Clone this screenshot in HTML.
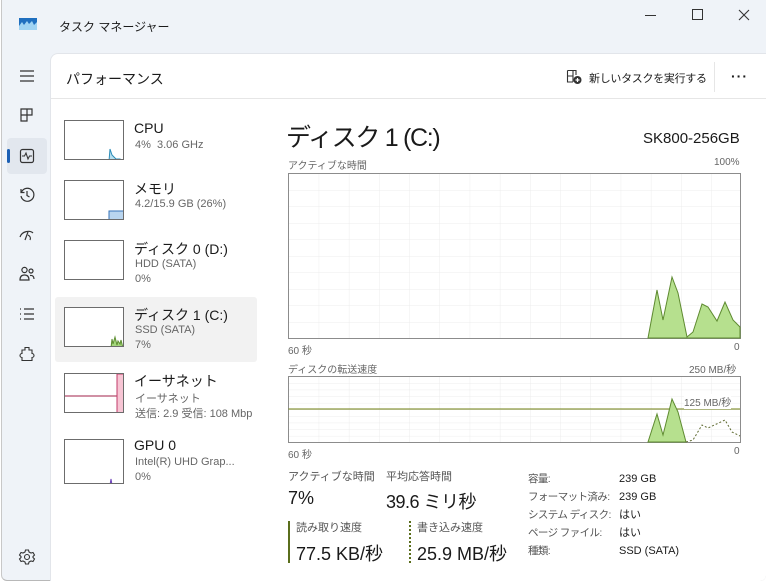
<!DOCTYPE html>
<html><head><meta charset="utf-8"><style>
*{margin:0;padding:0;box-sizing:border-box}
body{width:766px;height:583px;overflow:hidden;background:#fff;font-family:"Liberation Sans","Noto Sans CJK JP",sans-serif;color:#1a1a1a;position:relative}
#win{position:absolute;left:1px;top:0;width:765px;height:581px;background:#eff3f8;border-left:1px solid #c8c8c8;border-bottom:1px solid #b8b8b8;border-radius:0 0 6px 6px}
.a{position:absolute;white-space:nowrap}
#panel{position:absolute;left:50px;top:53px;width:716px;height:528px;background:#fff;border-top:1px solid #e2e5ea;border-left:1px solid #e2e5ea;border-radius:8px 0 6px 0}
.th{position:absolute;left:64px;width:60px;height:40px;border:1px solid #6c6c6c;background:#fff;overflow:hidden}
.t1{font-size:14px;color:#1a1a1a}
.t2{font-size:11px;color:#666}
.s{font-size:10px;color:#666}
.ic{position:absolute;left:16px;width:18px;height:18px}
</style></head><body>
<div id="win">
<svg class="a" style="left:17px;top:18px" width="18" height="12"><rect width="18" height="12" fill="#9fd3f3"/><path d="M0 8 L3 4 L5 7 L8 3 L10 6 L13 3 L15 7 L18 4 V0 H0Z" fill="#1f6fbf"/></svg>
<div class="a" style="left:57px;top:18px;font-size:12px">タスク マネージャー</div>
<div class="a" style="left:643px;top:15px;width:11px;height:1px;background:#333"></div>
<div class="a" style="left:690px;top:9px;width:11px;height:11px;border:1px solid #333"></div>
<svg class="a" style="left:736px;top:9px" width="12" height="12"><path d="M1 1L11 11M11 1L1 11" stroke="#333" stroke-width="1.1"/></svg>
<svg class="ic" style="top:67px" viewBox="0 0 18 18"><path d="M2 4H16M2 9H16M2 14H16" stroke="#333" stroke-width="1.2"/></svg>
<svg class="ic" style="top:106px" viewBox="0 0 18 18"><path d="M3 3H14V9H9V15H3Z M9 3V9 M3 9H9" fill="none" stroke="#333" stroke-width="1.2"/></svg>
<div class="a" style="left:5px;top:138px;width:40px;height:36px;background:#e2e7ee;border-radius:4px"></div>
<div class="a" style="left:5px;top:149px;width:3px;height:14px;background:#1b5fb4;border-radius:2px"></div>
<svg class="ic" style="top:147px" viewBox="0 0 18 18"><rect x="2.5" y="2.5" width="13" height="13" rx="2" fill="none" stroke="#333" stroke-width="1.2"/><path d="M4 9H6.5L8 6L10 12L11.5 9H14" fill="none" stroke="#333" stroke-width="1.1"/></svg>
<svg class="ic" style="top:186px" viewBox="0 0 18 18"><path d="M3.5 6A6.5 6.5 0 1 1 3 10M3 3V6.5H6.5M9 5V9.5L11.5 11" fill="none" stroke="#333" stroke-width="1.2"/></svg>
<svg class="ic" style="top:226px" viewBox="0 0 18 18"><path d="M2 11C4 5 12 4 15 7M7 14L10 6M10 9C12 10 13 12 12 14" fill="none" stroke="#333" stroke-width="1.2"/></svg>
<svg class="ic" style="top:265px" viewBox="0 0 18 18"><circle cx="6.5" cy="5" r="2.6" fill="none" stroke="#333" stroke-width="1.2"/><circle cx="13" cy="6" r="2" fill="none" stroke="#333" stroke-width="1.2"/><path d="M2 15C2 11 4 10 6.5 10C9 10 11 11 11 15ZM12 10.5C15 10 16 12 16 14" fill="none" stroke="#333" stroke-width="1.2"/></svg>
<svg class="ic" style="top:305px" viewBox="0 0 18 18"><path d="M6 4H16M6 9H16M6 14H16M2 4H3M2 9H3M2 14H3" stroke="#333" stroke-width="1.3"/></svg>
<svg class="ic" style="top:345px" viewBox="0 0 18 18"><path d="M7 2.5H11V5H14V8.5A2 2 0 0 1 14 12.5V15.5H4V12.5A2 2 0 0 1 4 8.5V5H7Z" fill="none" stroke="#333" stroke-width="1.1"/></svg>
<svg class="ic" style="top:548px" viewBox="0 0 18 18"><circle cx="9" cy="9" r="2.5" fill="none" stroke="#333" stroke-width="1.1"/><path d="M7.5 2H10.5L11 4L13 5L15 4.5L16.5 7L15 8.5V9.5L16.5 11L15 13.5L13 13L11 14L10.5 16H7.5L7 14L5 13L3 13.5L1.5 11L3 9.5V8.5L1.5 7L3 4.5L5 5L7 4Z" fill="none" stroke="#333" stroke-width="1.1"/></svg>
</div>

<div id="panel"></div>
<div class="a" style="left:51px;top:98px;width:715px;height:1px;background:#e6e6e6"></div>
<div class="a" style="left:66px;top:69px;font-size:14px">パフォーマンス</div>
<svg class="a" style="left:566px;top:69px" width="16" height="16"><path d="M1.5 1.5H10V6M1.5 1.5V13H7M1.5 7H7M7 1.5V13" fill="none" stroke="#333" stroke-width="1.1"/><circle cx="11.5" cy="11" r="4" fill="#333"/><path d="M11.5 9V13M9.5 11H13.5" stroke="#fff" stroke-width="1.2"/></svg>
<div class="a" style="left:589px;top:70px;font-size:11px;letter-spacing:-0.3px">新しいタスクを実行する</div>
<div class="a" style="left:714px;top:62px;width:1px;height:30px;background:#e6e6e6"></div>
<div class="a" style="left:731px;top:68px;font-size:14px;letter-spacing:1px;font-weight:bold">···</div>

<div class="a" style="left:55px;top:297px;width:202px;height:65px;background:#f2f2f2;border-radius:3px"></div>
<div class="th" style="top:120px"><svg width="60" height="40"><path d="M44 40L45 28L47 34L49 36L51 38L55 38L58 40Z" fill="#b7dfef" stroke="#2a8cb8"/></svg></div>
<div class="a t1" style="left:134px;top:120px">CPU</div>
<div class="a t2" style="left:135px;top:139px">4%&nbsp; 3.06 GHz</div>

<div class="th" style="top:180px"><svg width="60" height="40"><path d="M44 40V30H60V40Z" fill="#b9d5ef" stroke="#3673b8"/></svg></div>
<div class="a t1" style="left:134px;top:179px">メモリ</div>
<div class="a t2" style="left:135px;top:198px">4.2/15.9 GB (26%)</div>

<div class="th" style="top:240px"></div>
<div class="a t1" style="left:134px;top:239px">ディスク 0 (D:)</div>
<div class="a t2" style="left:135px;top:258px">HDD (SATA)</div>
<div class="a t2" style="left:135px;top:273px">0%</div>

<div class="th" style="top:307px"><svg width="60" height="40"><path d="M46 40L47 31L48 36L50 29L52 37L53 33L55 36L56 32L58 40Z" fill="#a4d67c" stroke="#5c8d2f"/></svg></div>
<div class="a t1" style="left:134px;top:305px">ディスク 1 (C:)</div>
<div class="a t2" style="left:135px;top:324px">SSD (SATA)</div>
<div class="a t2" style="left:135px;top:339px">7%</div>

<div class="th" style="top:373px"><svg width="60" height="45"><path d="M0 22H60" stroke="#a0224a"/><rect x="52" y="0" width="8" height="45" fill="#f7c5d4" stroke="#c23b6a"/></svg></div>
<div class="a t1" style="left:134px;top:371px">イーサネット</div>
<div class="a t2" style="left:135px;top:390px">イーサネット</div>
<div class="a t2" style="left:135px;top:405px">送信: 2.9 受信: 108 Mbp</div>

<div class="th" style="top:439px;height:45px"><svg width="60" height="45"><path d="M45 45L46 39L47 45Z" fill="#b9a4e2" stroke="#6b3fb8"/></svg></div>
<div class="a t1" style="left:134px;top:437px">GPU 0</div>
<div class="a t2" style="left:135px;top:456px">Intel(R) UHD Grap...</div>
<div class="a t2" style="left:135px;top:471px">0%</div>

<div class="a" style="left:286px;top:118px;font-size:25px;letter-spacing:-1.3px">ディスク 1 (C:)</div>
<div class="a" style="left:643px;top:130px;font-size:15px">SK800-256GB</div>
<div class="a s" style="left:288px;top:157px">アクティブな時間</div>
<div class="a s" style="left:714px;top:157px">100%</div>
<svg class="a" style="left:288px;top:173px" width="453" height="166">
<defs><pattern id="g" width="30.2" height="16.5" patternUnits="userSpaceOnUse" x="0.5" y="0.5"><path d="M0 0V16.5M0 0H30.2" stroke="#ececec" fill="none"/></pattern></defs>
<rect x="0.5" y="0.5" width="452" height="165" fill="url(#g)" stroke="#8c8c8c"/>
<path d="M360 165L369 117L375 147L384 104L390 120L399 164L405 159L414 131L420 134L429 148L437 129L445 147L452 154V165Z" fill="#b6e08e" stroke="#5e8a30"/>
</svg>
<div class="a s" style="left:288px;top:342px">60 秒</div>
<div class="a s" style="left:734px;top:342px">0</div>
<div class="a s" style="left:288px;top:361px">ディスクの転送速度</div>
<div class="a s" style="left:689px;top:361px">250 MB/秒</div>
<svg class="a" style="left:288px;top:376px" width="453" height="67">
<defs><pattern id="g2" width="30.2" height="6.6" patternUnits="userSpaceOnUse" x="0.5" y="0.5"><path d="M0 0V6.6M0 0H30.2" stroke="#ececec" fill="none"/></pattern></defs>
<rect x="0.5" y="0.5" width="452" height="66" fill="url(#g2)" stroke="#8c8c8c"/>
<path d="M0.5 33H452" stroke="#6f7f10"/>
<path d="M360 66L369 38L375 59L384 23L390 36L398 66Z" fill="#b6e08e" stroke="#5e8a30"/>
<path d="M398 66L405 64L414 49L420 52L437 44L444 56L452 60" fill="none" stroke="#5e6a30" stroke-dasharray="2,2"/>
</svg>
<div class="a s" style="left:684px;top:394px;background:#fff">125 MB/秒</div>
<div class="a s" style="left:288px;top:446px">60 秒</div>
<div class="a s" style="left:734px;top:446px">0</div>

<div class="a" style="left:288px;top:468px;font-size:11px;color:#555">アクティブな時間</div>
<div class="a" style="left:288px;top:488px;font-size:18px">7%</div>
<div class="a" style="left:386px;top:468px;font-size:11px;color:#555">平均応答時間</div>
<div class="a" style="left:386px;top:488px;font-size:18px;letter-spacing:-0.5px">39.6 ミリ秒</div>
<div class="a" style="left:288px;top:521px;width:2px;height:42px;background:#5a6e1c"></div>
<div class="a" style="left:409px;top:521px;width:0;height:42px;border-left:2px dotted #5a6e1c"></div>
<div class="a" style="left:296px;top:519px;font-size:11px;color:#555">読み取り速度</div>
<div class="a" style="left:296px;top:540px;font-size:18px">77.5 KB/秒</div>
<div class="a" style="left:417px;top:519px;font-size:11px;color:#555">書き込み速度</div>
<div class="a" style="left:417px;top:540px;font-size:18px">25.9 MB/秒</div>
<div class="a" style="left:528px;top:470px;font-size:10.5px;letter-spacing:-0.6px;color:#555;line-height:18px">容量:<br>フォーマット済み:<br>システム ディスク:<br>ページ ファイル:<br>種類:</div>
<div class="a" style="left:619px;top:470px;font-size:11px;line-height:18px">239 GB<br>239 GB<br>はい<br>はい<br>SSD (SATA)</div>
</body></html>
